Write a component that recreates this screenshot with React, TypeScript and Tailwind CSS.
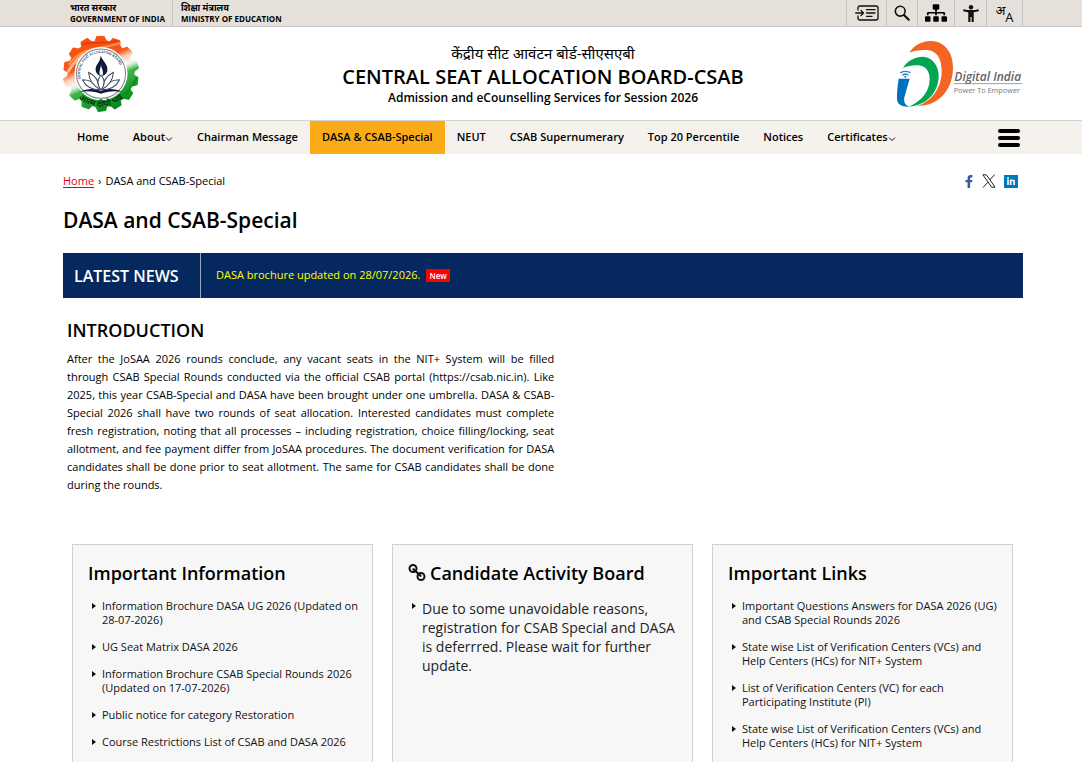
import React from "react";
import { FaFacebookF, FaLinkedinIn, FaSitemap } from "react-icons/fa";

const teeth = 14;
const gearPoints = Array.from({ length: teeth }, (_, i) => {
  const step = (Math.PI * 2) / teeth;
  const base = i * step - Math.PI / 2;
  return [
    [-0.4, 97],
    [-0.26, 110],
    [0.16, 112],
    [0.34, 99],
  ]
    .map(([f, r]) => {
      const a = base + f * step;
      return `${(113 + r * Math.cos(a)).toFixed(1)},${(112 + r * Math.sin(a)).toFixed(1)}`;
    })
    .join(" ");
}).join(" ");

function CsabLogo() {
  return (
    <svg viewBox="0 0 226 226" className="h-[76px] w-[76px]" role="img" aria-label="CSAB">
      <defs>
        <linearGradient id="tri" gradientUnits="userSpaceOnUse" x1="70" y1="12" x2="156" y2="212">
          <stop offset="0" stopColor="#f9500f" />
          <stop offset="0.32" stopColor="#f6561c" />
          <stop offset="0.41" stopColor="#fbcdb6" />
          <stop offset="0.5" stopColor="#f2f7f2" />
          <stop offset="0.54" stopColor="#dcefdc" />
          <stop offset="0.62" stopColor="#3db548" />
          <stop offset="1" stopColor="#05881a" />
        </linearGradient>
        <clipPath id="gear">
          <polygon points={gearPoints} />
        </clipPath>
        <path id="arcTop" d="M 53 128 A 62 62 0 1 1 173 128" />
        <path id="arcBottom" d="M 46 184 A 98 98 0 0 0 180 184" />
      </defs>
      <polygon points={gearPoints} fill="url(#tri)" stroke="url(#tri)" strokeWidth="4" strokeLinejoin="round" />
      <g clipPath="url(#gear)" fill="none" strokeLinecap="round">
        <path d="M18 84 C60 24 120 44 190 14" stroke="#ff9350" strokeWidth="6" />
        <path d="M6 124 C20 92 40 70 60 55" stroke="#ffb68a" strokeWidth="9" />
        <path d="M60 24 C100 14 130 26 170 12" stroke="#e83a06" strokeWidth="5" />
        <path d="M178 178 C205 160 210 140 222 120" stroke="#0a8f20" strokeWidth="8" />
      </g>
      <circle cx="113" cy="112" r="79" fill="#fff" />
      <circle cx="113" cy="112" r="73" fill="none" stroke="#7b828c" strokeWidth="3" />
      <text fontSize="10" fontWeight="700" fill="#33506b" fontFamily="Liberation Sans, sans-serif">
        <textPath href="#arcTop">CENTRAL SEAT ALLOCATION BOARD</textPath>
      </text>
      <g fill="#10183c">
        <path d="M112 58 C116 72 134 84 132 102 C131 112 122 118 116 120 C124 108 114 96 113 86 C112 96 106 104 110 119 C100 114 96 106 97 97 C98 84 112 76 112 58Z" />
        <path d="M50 166 C74 154 98 156 113 164 C128 156 152 154 176 166 C152 162 130 164 113 172 C96 164 74 162 50 166Z" />
      </g>
      <g fill="#fff" stroke="#3d4763" strokeWidth="3" strokeLinejoin="round">
        <path d="M58 130 C80 130 100 142 112 160 C88 160 68 152 58 130Z" />
        <path d="M168 130 C146 130 126 142 114 160 C138 160 158 152 168 130Z" />
        <path d="M76 108 C96 118 108 138 112 160 C92 150 78 136 76 108Z" />
        <path d="M150 108 C130 118 118 138 114 160 C134 150 148 136 150 108Z" />
        <path d="M113 116 C125 130 125 146 113 161 C101 146 101 130 113 116Z" />
      </g>
      <text fontSize="25" fontWeight="700" fill="#063d12" textAnchor="middle">
        <textPath href="#arcBottom" startOffset="50%">आत्म दीपो भव</textPath>
      </text>
    </svg>
  );
}

function DigitalIndiaLogo() {
  return (
    <svg viewBox="0 0 378 204" className="h-[68px] w-[126px]" role="img" aria-label="Digital India, Power To Empower">
      <path d="M37 38 C52 14 78 2 104 3 C142 5 168 36 168 82 C168 134 142 178 96 193 C84 197 72 198 60 198 C104 184 134 144 134 92 C134 54 118 32 90 30 C70 29 50 32 37 38Z" fill="#f26522" />
      <path d="M18 84 C30 62 54 50 78 50 C106 52 125 76 125 108 C125 152 94 196 36 200 C72 184 98 156 98 118 C98 92 86 78 64 76 C48 75 32 78 18 84Z" fill="#00a651" />
      <path d="M5 116 H38 L22 172 C20 186 24 196 38 200 C14 201 1 194 0 178 C-1 160 2 136 5 116Z" fill="#0072bc" />
      <g fill="none" stroke="#2f86c8" strokeWidth="4" strokeLinecap="round">
        <path d="M11 98 Q25 90 39 98" />
        <path d="M17 105 Q25 99 33 105" />
      </g>
      <circle cx="25" cy="110" r="3" fill="#0072bc" />
      <text x="172" y="124" fontSize="36" fontWeight="600" fontStyle="italic" fill="#636466" fontFamily="Open Sans, sans-serif">
        Digital India
      </text>
      <path d="M170 131 H376" stroke="#6d6e71" strokeWidth="2" />
      <text x="170" y="159" fontSize="22" fill="#77797c" fontFamily="Open Sans, sans-serif">
        Power To Empower
      </text>
    </svg>
  );
}

function SkipIcon() {
  return (
    <svg viewBox="0 0 24 16" className="h-4 w-6" fill="none" stroke="#111" strokeWidth="1.3" strokeLinecap="round" strokeLinejoin="round">
      <path d="M3 5V3q0-2 2-2h16q2 0 2 2v10q0 2-2 2H5q-2 0-2-2v-2" />
      <path d="M.7 8H8M6 5.500l2.500 2.500L6 10.500M11.500 4.700H20M11.500 8H20M11.500 11.300H17" />
    </svg>
  );
}

function SearchIcon() {
  return (
    <svg viewBox="0 0 16 16" className="h-4 w-4" fill="none" stroke="#111" strokeLinecap="round">
      <circle cx="6.200" cy="6.200" r="4.900" strokeWidth="1.600" />
      <path d="M10 10l4.700 4.700" strokeWidth="2.200" />
    </svg>
  );
}

function PersonIcon() {
  return (
    <svg viewBox="0 0 16 17" className="h-[17px] w-4" fill="#111">
      <circle cx="8" cy="2.200" r="2.200" />
      <path d="M.3 4.200 Q8 6 15.700 4.200 V6.200 L10.700 7.200 V17 H8.600 V12 H7.400 V17 H5.300 V7.200 L.3 6.200Z" />
    </svg>
  );
}

function ChainIcon() {
  return (
    <svg viewBox="0 0 18 18" className="h-[18px] w-[18px]" fill="none" stroke="#111" strokeWidth="2">
      <circle cx="5" cy="4.500" r="3.500" />
      <circle cx="13" cy="12.500" r="3.500" />
      <path d="M5.500 5.200l7 6.600" strokeWidth="2.200" strokeLinecap="round" />
    </svg>
  );
}

function XIcon() {
  return (
    <svg viewBox="0 0 14 14" className="h-[14px] w-[14px]" fill="none" stroke="#222" strokeWidth="1">
      <path d="M.9.800h3.400l8.800 12.400H9.700z" />
      <path d="M12.700.500L7.900 5.900M6.100 8L1 13.500" />
    </svg>
  );
}

function Chevron() {
  return (
    <svg viewBox="0 0 8 6" className="mt-[3px] h-[6px] w-2" fill="none" stroke="#111" strokeWidth="1">
      <path d="M1 1.500l3 3 3-3" />
    </svg>
  );
}

const tools = [
  { label: "Skip to main content", width: "w-10", icon: <SkipIcon /> },
  { label: "Search", width: "w-[31px]", icon: <SearchIcon /> },
  { label: "Sitemap", width: "w-[37px]", icon: <FaSitemap className="h-[18px] w-[22px]" /> },
  { label: "Accessibility", width: "w-8", icon: <PersonIcon /> },
];

const nav = [
  { label: "Home" },
  { label: "About", menu: true },
  { label: "Chairman Message" },
  { label: "DASA & CSAB-Special", active: true },
  { label: "NEUT" },
  { label: "CSAB Supernumerary" },
  { label: "Top 20 Percentile" },
  { label: "Notices" },
  { label: "Certificates", menu: true },
];

const information = [
  "Information Brochure DASA UG 2026 (Updated on 28-07-2026)",
  "UG Seat Matrix DASA 2026",
  "Information Brochure CSAB Special Rounds 2026 (Updated on 17-07-2026)",
  "Public notice for category Restoration",
  "Course Restrictions List of CSAB and DASA 2026",
];

const links = [
  "Important Questions Answers for DASA 2026 (UG) and CSAB Special Rounds 2026",
  "State wise List of Verification Centers (VCs) and Help Centers (HCs) for NIT+ System",
  "List of Verification Centers (VC) for each Participating Institute (PI)",
  "State wise List of Verification Centers (VCs) and Help Centers (HCs) for NIT+ System",
];

function Bullet() {
  return (
    <svg viewBox="0 0 4 6" className="mt-1 h-[6px] w-1 shrink-0" fill="#111">
      <path d="M0 0l4 3-4 3z" />
    </svg>
  );
}

function Card({ title, icon, children }: { title: string; icon?: React.ReactNode; children: React.ReactNode }) {
  return (
    <section className="flex-1 border border-[#d0d0d0] bg-[#f7f7f7] pt-4 pr-2 pb-6 pl-[15px]">
      <h2 className="flex items-center gap-1 text-[18px] leading-6 font-semibold">
        {icon}
        {title}
      </h2>
      {children}
    </section>
  );
}

function LinkList({ items }: { items: string[] }) {
  return (
    <ul className="mt-[14px] flex flex-col gap-[13px] pl-1 text-[11px] leading-[14px] text-[#111]">
      {items.map((item, i) => (
        <li key={i} className="flex gap-[6px]">
          <Bullet />
          <a href="#">{item}</a>
        </li>
      ))}
    </ul>
  );
}

export default function App() {
  return (
    <div className="h-screen overflow-hidden bg-white font-['Open_Sans','Noto_Sans',sans-serif] text-black">
      <div className="flex h-[27px] justify-between border-b border-[#c9c7c8] bg-[#e5e1da] pr-[59px] pl-[63px]">
        <div className="flex text-[8px] leading-[11px] font-bold">
          <a href="#" className="border-r border-[#c5c3c4] px-[7px] pt-[2px]">
            <span className="block text-[9px]" lang="hi">भारत सरकार</span>
            GOVERNMENT OF INDIA
          </a>
          <a href="#" className="pt-[2px] pl-2">
            <span className="block text-[9px]" lang="hi">शिक्षा मंत्रालय</span>
            MINISTRY OF EDUCATION
          </a>
        </div>
        <div className="flex border-r border-[#c5c3c8]">
          {tools.map((t) => (
            <button key={t.label} aria-label={t.label} className={`flex items-center justify-center border-l border-[#c5c3c8] ${t.width}`}>
              {t.icon}
            </button>
          ))}
          <button aria-label="Language" className="flex w-9 justify-center border-l border-[#c5c3c8] text-[13px] leading-[20px]">
            <span lang="hi">अ</span>
            <span className="pt-[7px]">A</span>
          </button>
        </div>
      </div>

      <header className="flex h-[93px] items-center justify-between pr-[59px] pl-[63px]">
        <div className="flex w-[126px]">
          <CsabLogo />
        </div>
        <a href="#" className="text-center">
          <span className="block text-[15px] leading-6" lang="hi">केंद्रीय सीट आवंटन बोर्ड-सीएसएबी</span>
          <span className="block text-[20px] leading-6 font-semibold">CENTRAL SEAT ALLOCATION BOARD-CSAB</span>
          <span className="block text-[12px] leading-[18px] font-semibold">Admission and eCounselling Services for Session 2026</span>
        </a>
        <DigitalIndiaLogo />
      </header>

      <nav className="flex h-[34px] items-stretch justify-between border-t border-[#d3d3d3] bg-[#f5f2ed] pr-[62px] pl-[65px] text-[11px] font-semibold">
        <ul className="flex">
          {nav.map((n) => (
            <li key={n.label} className="flex">
              <a href="#" className={n.active ? "flex items-center bg-[#fbab18] px-3" : "flex items-center px-3"}>
                {n.label}
                {n.menu && <Chevron />}
              </a>
            </li>
          ))}
        </ul>
        <button aria-label="Menu" className="flex flex-col justify-center gap-[3px]">
          <span className="h-1 w-[22px] rounded-full bg-black" />
          <span className="h-1 w-[22px] rounded-full bg-black" />
          <span className="h-1 w-[22px] rounded-full bg-black" />
        </button>
      </nav>

      <main className="pr-[59px] pl-[63px]">
        <div className="flex items-center justify-between pt-[19px] pr-[5px]">
          <div className="flex gap-1 text-[11px] leading-4">
            <a href="#" className="text-[#e00010] underline underline-offset-2">Home</a>
            <span>›</span>
            <span>DASA and CSAB-Special</span>
          </div>
          <div className="flex items-center gap-2">
            <a href="#" aria-label="Facebook"><FaFacebookF className="h-[13px] w-[10px] text-[#3b5998]" /></a>
            <a href="#" aria-label="X"><XIcon /></a>
            <a href="#" aria-label="LinkedIn" className="bg-[#007ab9] p-[2px]"><FaLinkedinIn className="h-[9px] w-[10px] text-white" /></a>
          </div>
        </div>

        <h1 className="mt-[17px] text-[21px] leading-7 font-semibold">DASA and CSAB-Special</h1>

        <div className="mt-[19px] flex h-[45px] items-center bg-[#05285f]">
          <h2 className="flex h-full w-[138px] items-center border-r border-[#9aa7bd] pl-[11px] text-[16px] font-semibold text-white">LATEST NEWS</h2>
          <a href="#" className="pl-[15px] text-[11px] text-[#ffff00]">DASA brochure updated on 28/07/2026.</a>
          <span className="ml-[6px] bg-[#ff0000] px-[3px] text-[8px] leading-[13px] font-semibold text-white">New</span>
        </div>

        <section className="w-[52%] pt-5 pl-1">
          <h2 className="text-[18px] leading-6 font-semibold">INTRODUCTION</h2>
          <p className="mt-2 pr-2 text-justify text-[11px] leading-[18px]">
            After the JoSAA 2026 rounds conclude, any vacant seats in the NIT+ System will be filled through CSAB
            Special Rounds conducted via the official CSAB portal (https://csab.nic.in). Like 2025, this year
            CSAB-Special and DASA have been brought under one umbrella. DASA &amp; CSAB-Special 2026 shall have two
            rounds of seat allocation. Interested candidates must complete fresh registration, noting that all
            processes – including registration, choice filling/locking, seat allotment, and fee payment differ from
            JoSAA procedures. The document verification for DASA candidates shall be done prior to seat allotment. The
            same for CSAB candidates shall be done during the rounds.
          </p>
        </section>

        <div className="mt-[50px] flex gap-[19px] pr-[10px] pl-[9px]">
          <Card title="Important Information">
            <LinkList items={information} />
          </Card>
          <Card title="Candidate Activity Board" icon={<ChainIcon />}>
            <ul className="mt-[14px] pl-1">
              <li className="flex gap-[6px] text-[14px] leading-[19px] text-[#222]">
                <Bullet />
                Due to some unavoidable reasons, registration for CSAB Special and DASA is deferrred. Please wait for
                further update.
              </li>
            </ul>
          </Card>
          <Card title="Important Links">
            <LinkList items={links} />
          </Card>
        </div>
      </main>
    </div>
  );
}
